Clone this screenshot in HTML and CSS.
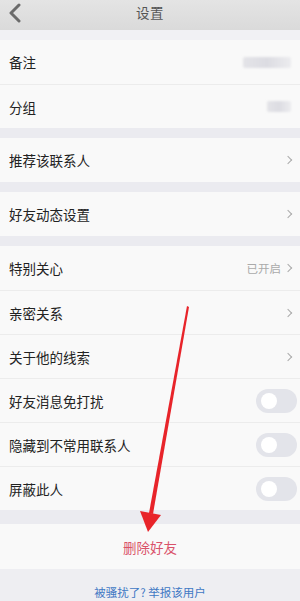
FILE: index.html
```html
<!DOCTYPE html>
<html lang="zh">
<head>
<meta charset="utf-8">
<link rel="stylesheet" href="styles.css">
</head>
<body>
<div class="screen">
  <header class="topbar">
    <svg class="back" width="14" height="20" viewBox="0 0 14 20"><polyline points="11,2 3,10 11,18" fill="none" stroke="#6b6b6b" stroke-width="3" stroke-linecap="round" stroke-linejoin="round"/></svg>
    <div class="title">设置</div>
  </header>
  <div class="gap first"></div>
  <section class="group">
    <div class="row"><span class="label">备注</span><span class="blur wide"></span></div>
    <div class="row"><span class="label">分组</span><span class="blur narrow"></span></div>
  </section>
  <div class="gap"></div>
  <section class="group">
    <div class="row"><span class="label">推荐该联系人</span><span class="chev"></span></div>
  </section>
  <div class="gap"></div>
  <section class="group">
    <div class="row"><span class="label">好友动态设置</span><span class="chev"></span></div>
  </section>
  <div class="gap"></div>
  <section class="group">
    <div class="row"><span class="label">特别关心</span><span class="right"><span class="value">已开启</span><span class="chev"></span></span></div>
    <div class="row"><span class="label">亲密关系</span><span class="chev"></span></div>
    <div class="row"><span class="label">关于他的线索</span><span class="chev"></span></div>
    <div class="row"><span class="label">好友消息免打扰</span><span class="toggle"></span></div>
    <div class="row"><span class="label">隐藏到不常用联系人</span><span class="toggle"></span></div>
    <div class="row"><span class="label">屏蔽此人</span><span class="toggle"></span></div>
  </section>
  <div class="gap big"></div>
  <section class="group">
    <div class="row center"><span class="danger">删除好友</span></div>
  </section>
  <footer class="foot"><span class="report">被骚扰了? 举报该用户</span></footer>

  <svg class="arrow" width="300" height="601" viewBox="0 0 300 601">
    <polygon points="187,306 189,307 153,514 149,513" fill="#e8242a"/>
    <polygon points="140,511 161,515 148,532" fill="#e8242a"/>
  </svg>
</div>
</body>
</html>
```
FILE: styles.css
```css
* { box-sizing: border-box; margin: 0; padding: 0; }
html, body { width: 300px; height: 601px; overflow: hidden; }
body {
  font-family: "Noto Sans CJK SC", "Noto Sans", sans-serif;
  background: #eeeef2;
  color: #222;
}
.screen { position: relative; width: 300px; height: 601px; display: flex; flex-direction: column; }
.topbar {
  height: 30px;
  flex: none;
  background: linear-gradient(#e4e4e4, #dadada);
  display: flex;
  align-items: flex-start;
  justify-content: center;
  padding-top: 2px;
  position: relative;
}
.back { position: absolute; left: 8px; top: 3px; }
.title { font-size: 13.5px; line-height: 20px; color: #555; letter-spacing: 0.5px; }
.gap { height: 10px; flex: none; background: #ebebf0; }
.gap.first { background: #f1f1f4; }
.gap.big { height: 14px; }
.group { background: #f9f9f9; flex: none; }
.row {
  height: 44px;
  display: flex;
  align-items: center;
  justify-content: space-between;
  padding: 0 3px 0 9px;
  border-top: 1px solid #ececec;
}
.row:first-child { border-top: none; }
.label { font-size: 13.5px; color: #222; }
.right { display: flex; align-items: center; gap: 4px; }
.value { font-size: 11.5px; color: #aaa; }
.chev {
  width: 6px; height: 6px;
  border-right: 1.3px solid #aaa;
  border-top: 1.3px solid #aaa;
  transform: rotate(45deg);
  margin-right: 6px;
}
.blur { height: 11px; background: linear-gradient(90deg, #e4e4e8, #dcdce2 50%, #ececef); border-radius: 2px; filter: blur(1px); margin-right: 6px; }
.blur.wide { width: 48px; }
.blur.narrow { width: 24px; }
.toggle {
  width: 41px; height: 24px;
  border-radius: 12px;
  background: #e3e4ea;
  position: relative;
}
.toggle::after {
  content: "";
  position: absolute;
  left: 5px; top: 4px;
  width: 16px; height: 16px;
  border-radius: 50%;
  background: #fff;
}
.row.center { justify-content: center; height: 45px; padding: 0; }
.danger { font-size: 13.5px; color: #d9526a; }
.foot { flex: 1; display: flex; justify-content: center; padding-top: 15px; }
.report { font-size: 11.5px; color: #3f78c4; }
.arrow { position: absolute; left: 0; top: 0; pointer-events: none; }
```
